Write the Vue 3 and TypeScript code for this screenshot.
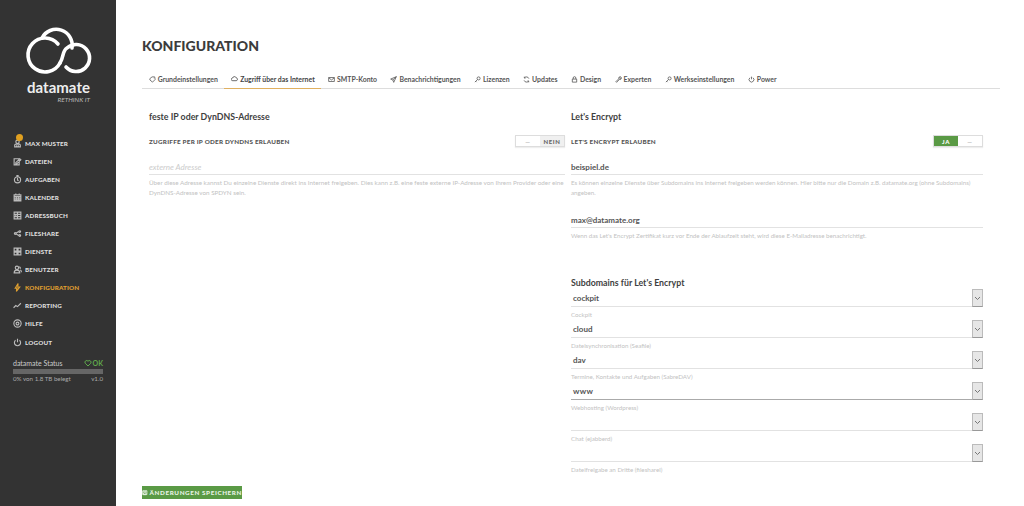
<script setup lang="ts">
const ic: Record<string, string> = {
  user: 'M8 2a3 3 0 1 0 0 6a3 3 0 1 0 0-6M3 14v-3q0-2 2-2h6q2 0 2 2v3zM6.500 11v3M9.500 11v3',
  edit: 'M2 3h9v11H2zM5 10l7-7 2 2-7 7H5z',
  clock: 'M8 3a5.500 5.500 0 1 0 0 11a5.500 5.500 0 1 0 0-11M6 1h4M8 5v4l2 1',
  cal: 'M2 3h12v11H2zM2 6h12M2 9h12M2 12h12M6 6v8M10 6v8M5 1v2M11 1v2',
  book: 'M2 2h12v12H2zM2 6h12M2 10h12M8 2v12M5 6v4',
  share: 'M12 3a1.500 1.500 0 1 0 .01 0M4 6.500a1.500 1.500 0 1 0 .01 0M12 10a1.500 1.500 0 1 0 .01 0M11 4L5 7.500M5 8.500l6 3.500',
  grid: 'M2 2h5v5H2zM9 2h5v5H9zM2 9h5v5H2zM9 9h5v5H9z',
  users: 'M7 2a3 3 0 1 0 0 6a3 3 0 1 0 0-6M2 14q0-5 5-5t5 5zM11 3q3 1 1.500 4M13 9q2 1 2 4',
  bolt: 'M9 1L4 9h3l-1 6 6-8H8.500z',
  chart: 'M1 12l4-4 3 2 6-6',
  help: 'M8 1.500a6.500 6.500 0 1 0 0 13a6.500 6.500 0 1 0 0-13M8 5.500a2.500 2.500 0 1 0 0 5a2.500 2.500 0 1 0 0-5',
  power: 'M8 1.500v6M4.500 4a5.500 5.500 0 1 0 7 0',
  tag: 'M2 6l5-4h6l1 6-6 6-6-5zM10.500 4.500h.5',
  cloud: 'M4 13a3 3 0 0 1-.5-6A4.500 4.500 0 0 1 12 6.500a3.300 3.300 0 0 1 0 6.500z',
  mail: 'M1.500 3.500h13v9h-13zM1.500 4l6.500 5 6.500-5',
  send: 'M14.500 1.500L1.500 7l5 2 2 5.500zM6.500 9l8-7.500',
  key: 'M10.500 2a3.500 3.500 0 1 0 0 7a3.500 3.500 0 1 0 0-7M8 8l-6 6M4 12l2 2',
  sync: 'M13.500 6A6 6 0 0 0 3 4.500M2.500 10A6 6 0 0 0 13 11.500M3 1.500v3h3M13 14.500v-3h-3',
  lock: 'M3 7h10v7H3zM5 7V4.500a3 3 0 0 1 6 0V7',
  wrench: 'M13 2a3.500 3.500 0 0 0-4.500 4.500L2 13l1.500 1.500L10 8a3.500 3.500 0 0 0 4.500-4.500L12 6l-2-2z',
  save: 'M2 3h12v11H2zM5 3v3h6V3M4.500 9h7v5h-7z',
  heart: 'M8 14L2.500 8.500a3.300 3.300 0 0 1 5.500-4 3.300 3.300 0 0 1 5.500 4z',
}
const nav = [
  ['user', 'MAX MUSTER'], ['edit', 'DATEIEN'], ['clock', 'AUFGABEN'], ['cal', 'KALENDER'],
  ['book', 'ADRESSBUCH'], ['share', 'FILESHARE'], ['grid', 'DIENSTE'], ['users', 'BENUTZER'],
  ['bolt', 'KONFIGURATION'], ['chart', 'REPORTING'], ['help', 'HILFE'], ['power', 'LOGOUT'],
]
const tabs = [
  ['tag', 'Grundeinstellungen'], ['cloud', 'Zugriff über das Internet'], ['mail', 'SMTP-Konto'],
  ['send', 'Benachrichtigungen'], ['key', 'Lizenzen'], ['sync', 'Updates'], ['lock', 'Design'],
  ['wrench', 'Experten'], ['key', 'Werkseinstellungen'], ['power', 'Power'],
]
const subs = [
  ['cockpit', 'Cockpit'], ['cloud', 'Dateisynchronisation (Seafile)'],
  ['dav', 'Termine, Kontakte und Aufgaben (SabreDAV)'], ['www', 'Webhosting (Wordpress)'],
  ['', 'Chat (ejabberd)'], ['', 'Dateifreigabe an Dritte (filesharel)'],
]
</script>

<template>
  <div class="page">
    <aside class="side">
      <div class="logo">
        <svg class="mark" width="116" height="76" viewBox="0 0 116 76" fill="none" stroke="#fff" stroke-width="3.600" stroke-linecap="round">
          <path d="M42 38 A16 16 0 0 1 72 48" />
          <path d="M58 44 A17 17 0 1 0 60 63" />
          <path d="M60 63 C64 57 62 51 67 48 A13.500 13.500 0 1 1 66 67" />
        </svg>
        <div class="brand">datamate</div>
        <div class="slogan">RETHINK IT</div>
      </div>
      <nav class="nav">
        <a v-for="(n, i) in nav" :key="n[1]" class="nav-item" :class="{ on: n[1] === 'KONFIGURATION' }">
          <span class="nav-ico">
            <svg width="9" height="9" viewBox="0 0 16 16" fill="none" stroke="currentColor" stroke-width="2"><path :d="ic[n[0]]" /></svg>
            <i v-if="i === 0" class="badge"></i>
          </span>
          {{ n[1] }}
        </a>
      </nav>
      <div class="status">
        <div class="st-top">
          <span>datamate Status</span>
          <span class="ok"><svg width="8" height="8" viewBox="0 0 16 16" fill="none" stroke="currentColor" stroke-width="2"><path :d="ic.heart" /></svg>OK</span>
        </div>
        <div class="bar"></div>
        <div class="st-bot"><span>0% von 1.8 TB belegt</span><span>v1.0</span></div>
      </div>
    </aside>

    <main class="main">
      <h1 class="title">KONFIGURATION</h1>
      <div class="tabs">
        <a v-for="(t, i) in tabs" :key="t[1]" class="tab" :class="{ active: i === 1 }">
          <svg width="7" height="7" viewBox="0 0 16 16" fill="none" stroke="currentColor" stroke-width="1.800"><path :d="ic[t[0]]" /></svg>
          {{ t[1] }}
        </a>
      </div>

      <div class="cols">
        <section class="col left">
          <h2 class="sec">feste IP oder DynDNS-Adresse</h2>
          <div class="switch-row">
            <span class="lab">ZUGRIFFE PER IP ODER DYNDNS ERLAUBEN</span>
            <div class="switch">
              <span class="sw-part dash">—</span>
              <span class="sw-part no">NEIN</span>
            </div>
          </div>
          <div class="field ph">externe Adresse</div>
          <p class="help wide">Über diese Adresse kannst Du einzelne Dienste direkt ins Internet freigeben. Dies kann z.B. eine feste externe IP-Adresse von Ihrem Provider oder eine DynDNS-Adresse von SPDYN sein.</p>
        </section>

        <section class="col right">
          <h2 class="sec">Let's Encrypt</h2>
          <div class="switch-row">
            <span class="lab">LET'S ENCRYPT ERLAUBEN</span>
            <div class="switch">
              <span class="sw-part yes">JA</span>
              <span class="sw-part dash">—</span>
            </div>
          </div>
          <div class="field">beispiel.de</div>
          <p class="help">Es können einzelne Dienste über Subdomains ins Internet freigeben werden können. Hier bitte nur die Domain z.B. datamate.org (ohne Subdomains) angeben.</p>
          <div class="field second">max@datamate.org</div>
          <p class="help">Wenn das Let's Encrypt Zertifikat kurz vor Ende der Ablaufzeit steht, wird diese E-Mailadresse benachrichtigt.</p>

          <h2 class="sec subs">Subdomains für Let's Encrypt</h2>
          <div v-for="s in subs" :key="s[1]" class="sel-wrap">
            <div class="sel" :class="{ dark: s[0] === 'www' }">
              <span class="sel-val">{{ s[0] }}</span>
              <span class="sel-btn">
                <svg width="7" height="5" viewBox="0 0 7 5" fill="none" stroke="#777" stroke-width="1"><path d="M1 1l2.500 2.500L6 1" /></svg>
              </span>
            </div>
            <div class="sel-help">{{ s[1] }}</div>
          </div>
        </section>
      </div>

      <button class="save">
        <svg width="7" height="7" viewBox="0 0 16 16" fill="none" stroke="currentColor" stroke-width="2.500"><path :d="ic.save" /></svg>
        ÄNDERUNGEN SPEICHERN
      </button>
    </main>
  </div>
</template>

<style>
html, body { margin: 0; overflow: hidden; background: #fff; }
</style>

<style scoped>
.page {
  display: flex;
  width: 1024px;
  height: 506px;
  overflow: hidden;
  font-family: Lato, "Open Sans", sans-serif;
  color: #444;
}
.side {
  width: 116px;
  flex: none;
  background: #333;
  color: #ddd;
  display: flex;
  flex-direction: column;
}
.logo { height: 134px; }
.mark { display: block; }
.brand {
  text-align: center;
  color: #eee;
  font-size: 15px;
  font-weight: 700;
  line-height: 18px;
  margin-top: 2px;
  padding-left: 1px;
}
.slogan {
  color: #bbb;
  font-size: 6.500px;
  font-style: italic;
  text-align: right;
  padding-right: 26px;
  line-height: 8px;
}
.nav { display: flex; flex-direction: column; }
.nav-item {
  height: 18.100px;
  display: flex;
  align-items: center;
  padding-left: 13px;
  font-size: 6.300px;
  font-weight: 900;
  letter-spacing: .12px;
  color: #ddd;
  white-space: nowrap;
}
.nav-item.on { color: #e0a030; }
.nav-ico { width: 12px; position: relative; display: flex; align-items: center; color: #bbb; }
.on .nav-ico { color: #e0a030; }
.badge {
  position: absolute;
  left: 3px;
  top: -5px;
  width: 7px;
  height: 7px;
  border-radius: 50%;
  background: #e0a020;
}
.status { margin: 7px 13px 0; font-size: 6.200px; color: #ccc; }
.st-top { display: flex; justify-content: space-between; align-items: center; font-size: 7px; line-height: 10px; }
.ok { color: #5fa84c; font-weight: 700; display: flex; align-items: center; gap: 1px; }
.bar { height: 4.500px; background: #666; margin-top: 1px; }
.st-bot { display: flex; justify-content: space-between; line-height: 10px; color: #aaa; }

.main { flex: 1; padding: 0 24px 0 26px; min-width: 0; position: relative; }
.title {
  margin: 38px 0 0;
  font-size: 14px;
  line-height: 16px;
  font-weight: 900;
  color: #3c3c3c;
}
.tabs {
  display: flex;
  height: 17px;
  margin-top: 17px;
  border-bottom: 1px solid #ddd;
}
.tab {
  display: flex;
  align-items: center;
  gap: 2px;
  height: 18px;
  padding: 0 6.700px 2px;
  box-sizing: border-box;
  font-size: 6.900px;
  font-weight: 700;
  color: #555;
  white-space: nowrap;
}
.tab.active { border-bottom: 1px solid #e0b060; color: #444; }
.cols {
  display: grid;
  grid-template-columns: 416px 412px;
  column-gap: 6px;
  padding-left: 7px;
}
.sec {
  margin: 22px 0 0;
  font-size: 8.800px;
  line-height: 12px;
  font-weight: 700;
  color: #3f3f3f;
}
.switch-row {
  display: flex;
  justify-content: space-between;
  align-items: center;
  height: 12px;
  margin-top: 12px;
}
.lab { font-size: 6.300px; font-weight: 900; letter-spacing: .25px; color: #555; }
.switch {
  display: flex;
  width: 48px;
  height: 9.500px;
  border: 1px solid #ddd;
  box-shadow: 0 1px 1px #eee;
  font-size: 6px;
  font-weight: 900;
  letter-spacing: .6px;
}
.sw-part { flex: 1; display: flex; align-items: center; justify-content: center; }
.dash { color: #bbb; background: #fff; }
.no { background: #f0f0f0; color: #666; }
.yes { background: #5a9a45; color: #fff; }
.field {
  margin-top: 13px;
  height: 15px;
  line-height: 14px;
  box-sizing: border-box;
  border-bottom: 1px solid #e2e2e2;
  font-size: 8px;
  font-weight: 700;
  color: #555;
}
.field.ph { color: #ccc; font-style: italic; font-weight: 400; }
.field.second { margin-top: 15px; }
.help {
  margin: 3px 0 0;
  font-size: 6.200px;
  line-height: 10px;
  color: #c2c2c2;
}
.help.wide { font-size: 6.300px; }
.sec.subs { margin-top: 36px; }
.sel-wrap { height: 31px; }
.sel {
  display: flex;
  height: 18px;
  box-sizing: border-box;
  align-items: flex-end;
}
.sel-val {
  flex: 1;
  height: 15px;
  line-height: 13px;
  padding-left: 2px;
  box-sizing: border-box;
  border-bottom: 1px solid #e2e2e2;
  font-size: 8px;
  font-weight: 700;
  color: #555;
}
.sel.dark .sel-val { border-bottom-color: #aaa; letter-spacing: .3px; }
.sel-btn {
  width: 11px;
  height: 18px;
  box-sizing: border-box;
  background: #e6e6e6;
  border: 1px solid #bbb;
  border-bottom-color: #999;
  display: flex;
  align-items: center;
  justify-content: center;
}
.sel-help {
  font-size: 6.200px;
  line-height: 10px;
  margin-top: 3px;
  color: #c2c2c2;
}
.save {
  position: absolute;
  left: 26px;
  top: 486px;
  width: 100px;
  height: 13px;
  padding: 0;
  border: 0;
  background: #5a9a45;
  color: #e8f2e4;
  font-family: inherit;
  font-size: 6.300px;
  font-weight: 900;
  letter-spacing: .6px;
  white-space: nowrap;
  display: flex;
  align-items: center;
  justify-content: center;
  gap: 2px;
}
</style>
